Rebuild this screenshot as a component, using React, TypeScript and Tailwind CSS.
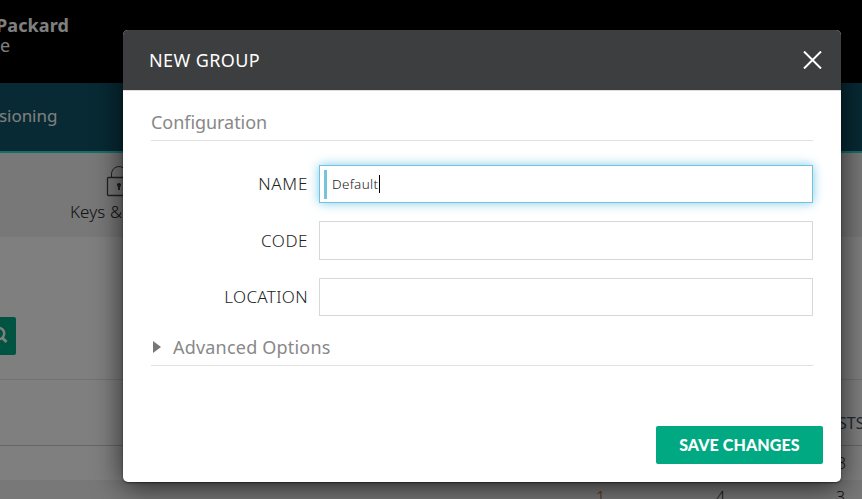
import type { ReactNode } from "react";

function Field({ label, className, children }: { label: ReactNode; className: string; children?: ReactNode }) {
  return (
    <div className="flex items-center">
      <label className="w-[156px] shrink-0 text-right text-[17px] font-light leading-5 text-[#222] font-['Noto_Sans',sans-serif]">
        {label}
      </label>
      <div className={`ml-3 flex w-[494px] items-center border bg-white ${className}`}>{children}</div>
    </div>
  );
}

function Background() {
  return (
    <div className="flex h-full flex-col bg-white text-[#555]">
      <header className="h-[83px] shrink-0 bg-black pt-[15px] text-[18px] leading-5 text-white font-['Noto_Sans',sans-serif]">
        <div className="-ml-[4px] font-bold tracking-[0.1px]">Packard</div>
        <div className="text-[18px]">e</div>
      </header>
      <nav className="h-[70px] shrink-0 border-b-2 border-[#2edcd0] bg-[#0e5468] pt-[21px] text-[17px] leading-6 text-white font-['Noto_Sans',sans-serif]">
        <span className="-ml-px tracking-[-0.05px]">sioning</span>
      </nav>
      <div className="h-[84px] shrink-0 bg-[#f1f1f1] pl-[70px] pt-3">
        <svg className="ml-[36px] block" width="26" height="32" viewBox="0 0 26 32" fill="none" stroke="#444">
          <path d="M5.5 12V9a7.5 7.5 0 0 1 15 0v3" />
          <rect x="1.5" y="12.5" width="23" height="18" rx="1" strokeWidth="1.3" />
          <circle cx="13" cy="20" r="2" fill="#333" stroke="none" />
          <path d="M13 20v5" strokeWidth="2" />
        </svg>
        <div className="mt-[3px] text-[17px] font-light leading-6 tracking-[0.1px] text-[#222] font-['Noto_Sans',sans-serif]">
          Keys &amp;
        </div>
      </div>
      <div className="h-[142px] shrink-0 pt-[80px]">
        <div className="flex h-[38px] w-4 items-center justify-end rounded-r-[2px] bg-[#01a982] pb-[3px] pr-2">
          <svg className="shrink-0" width="18" height="18" viewBox="0 0 18 18" fill="none" stroke="white" strokeWidth="2.5">
            <circle cx="8.5" cy="7.5" r="5.7" />
            <path d="m12.5 12 4 4" strokeWidth="3" />
          </svg>
        </div>
      </div>
      <div className="h-[67px] shrink-0 border-b border-t border-b-[#ccc] border-t-[#e4e4e4] pl-[838px] pt-[33px] text-[16px] leading-5 text-[#425563] font-['Noto_Sans',sans-serif]">
        STS
      </div>
      <div className="h-[34px] shrink-0 pl-[837px] pt-[7px] text-[16px] font-light leading-5 text-[#222] font-['Noto_Sans',sans-serif]">
        3
      </div>
      <div className="grid grow grid-cols-[596px_120px_120px_26px] bg-[#f1f1f1] pt-[7px] text-[16px] font-light leading-5 text-[#222] font-['Noto_Sans',sans-serif]">
        <span />
        <span className="text-[#a65c1c]">1</span>
        <span>4</span>
        <span>3</span>
      </div>
    </div>
  );
}

function Dialog() {
  return (
    <section className="flex h-[452px] w-[718px] flex-col rounded-[5px] bg-white shadow-[0_5px_30px_rgba(0,0,0,0.7),0_1px_2px_rgba(0,0,0,0.5)] font-['Noto_Sans',sans-serif]">
      <header className="flex h-[60px] shrink-0 items-center justify-between rounded-t-[5px] bg-[#3d3e40] pl-[26px] pr-[19px] text-white">
        <h1 className="text-[18px] leading-6 tracking-[0.4px]">NEW GROUP</h1>
        <button aria-label="Close">
          <svg width="19" height="18" viewBox="0 0 19 18" fill="none" stroke="white" strokeWidth="2">
            <path d="m1 .5 17 17M18 .5l-17 17" />
          </svg>
        </button>
      </header>
      <div className="flex grow flex-col border-t border-[#ddd] pl-7 pr-7">
        <h2 className="h-[50px] border-b border-[#e1e1e1] pt-[19px] text-[18px] leading-6 tracking-[-0.05px] text-[#888]">
          Configuration
        </h2>
        <div className="mt-6 flex flex-col gap-[18px]">
          <Field
            label={<span className="-mr-px tracking-[0.7px]">NAME</span>}
            className="h-[38px] border-[#6fc3df] pl-1 shadow-[0_0_10px_rgba(94,190,225,0.8)]"
          >
            <span className="h-[29px] w-[3px] bg-[#75c3dc]" />
            <span className="ml-[5px] w-[47px] pt-px text-[13.5px] font-light tracking-[0.3px] text-[#222]">Default</span>
            <span className="h-[18px] w-px bg-black" />
          </Field>
          <Field label={<span className="-mr-px tracking-[0.55px]">CODE</span>} className="h-[39px] border-[#d8d8d8]" />
          <Field
            label={<span className="-mr-px tracking-[0.35px]">LOCATION</span>}
            className="h-[38px] border-[#d8d8d8]"
          />
        </div>
        <div className="mt-[18px] flex h-[32px] border-b border-[#e1e1e1]">
          <svg className="ml-[2px] mt-[7px]" width="8" height="12" viewBox="0 0 8 12" fill="#777">
            <path d="M0 0v12l8-6z" />
          </svg>
          <h2 className="ml-[12px] mt-px text-[18px] leading-6 tracking-[0.2px] text-[#888]">Advanced Options</h2>
        </div>
      </div>
      <footer className="flex justify-end pb-[18px] pr-[18px]">
        <button className="h-[38px] w-[167px] rounded-[2px] bg-[#01a982] text-[16px] font-black tracking-[0.12px] text-white font-['Lato',sans-serif]">
          SAVE CHANGES
        </button>
      </footer>
    </section>
  );
}

export default function App() {
  return (
    <main className="relative h-[499px] w-[862px] overflow-hidden">
      <Background />
      <div className="absolute inset-0 bg-black/50 pl-[123px] pt-[30px]">
        <Dialog />
      </div>
    </main>
  );
}
